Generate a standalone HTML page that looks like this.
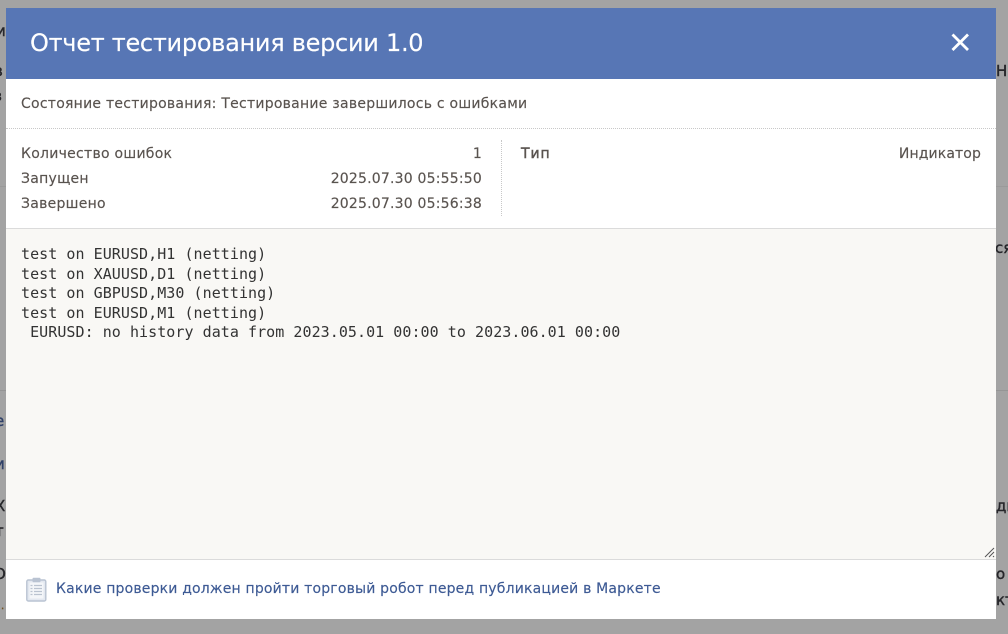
<!DOCTYPE html>
<html lang="ru"><head><meta charset="utf-8"><title>Отчет</title>
<style>
html,body{margin:0;padding:0;width:1008px;height:634px;overflow:hidden;background:#a3a3a3}
body{position:relative;font-family:"DejaVu Sans","Liberation Sans",sans-serif;color:#59534f}
.t{position:absolute;white-space:nowrap;font-size:14px;line-height:20px;letter-spacing:.2px;-webkit-text-stroke:.15px currentColor}
.bg{position:absolute;white-space:nowrap;font-size:15px;line-height:20px;color:#26262a;-webkit-text-stroke:.4px currentColor}
.line{position:absolute;background:#959595;height:1px}
</style></head><body>
<div class="line" style="left:0;top:390px;width:1008px"></div>
<div class="line" style="left:0;top:186px;width:1008px;background:#9a9a9a"></div>
<div class="bg" style="left:-4px;top:21px">и</div>
<div class="bg" style="left:-6px;top:61px">в</div>
<div class="bg" style="left:-6px;top:86px">з</div>
<div class="bg" style="left:-5px;top:411px;color:#2f4068">e</div>
<div class="bg" style="left:-5px;top:454px;color:#2f4068">и</div>
<div class="bg" style="left:-5px;top:496px">X</div>
<div class="bg" style="left:-5px;top:521px">т</div>
<div class="bg" style="left:-6px;top:564px">О</div>
<div class="bg" style="left:1px;top:597px;font-size:10px;color:#70501f">.</div>
<div class="bg" style="left:996px;top:61px">Н</div>
<div class="bg" style="left:995px;top:238px">ся</div>
<div class="bg" style="left:996px;top:496px">дн</div>
<div class="bg" style="left:996px;top:564px">о</div>
<div class="bg" style="left:996px;top:590px">кт</div>

<div style="position:absolute;left:6px;top:8px;width:990px;height:611px;background:#fff;overflow:hidden">
  <div style="position:absolute;left:0;top:0;width:990px;height:71px;background:#5776b5"></div>
  <div class="t" style="left:24px;top:19px;font-size:24px;line-height:32px;color:#fff;letter-spacing:-.28px">Отчет тестирования версии 1.0</div>
  <svg style="position:absolute;left:944px;top:25px" width="21" height="19" viewBox="0 0 21 19"><path d="M2.5 1.5L18 17M18 1.5L2.5 17" stroke="#fff" stroke-width="2.8" fill="none"/></svg>
  <div class="t" style="left:15px;top:86px;letter-spacing:.25px">Состояние тестирования: Тестирование завершилось с ошибками</div>
  <div style="position:absolute;left:0;top:120px;width:990px;border-top:1px dotted #c8c8c8"></div>

  <div class="t" style="left:15px;top:136px;letter-spacing:.27px">Количество ошибок</div>
  <div class="t" style="left:15px;top:161px;letter-spacing:.27px">Запущен</div>
  <div class="t" style="left:15px;top:186px;letter-spacing:.27px">Завершено</div>
  <div class="t" style="right:514px;top:136px">1</div>
  <div class="t" style="right:514px;top:161px">2025.07.30 05:55:50</div>
  <div class="t" style="right:514px;top:186px">2025.07.30 05:56:38</div>
  <div style="position:absolute;left:495px;top:132px;height:76px;border-left:1px dotted #c8c8c8"></div>
  <div class="t" style="left:515px;top:136px;letter-spacing:.9px;-webkit-text-stroke:.45px currentColor">Тип</div>
  <div class="t" style="right:15px;top:136px;letter-spacing:.12px">Индикатор</div>

  <div style="position:absolute;left:0;top:220px;width:990px;height:330px;background:#f9f8f5;border-top:1px solid #dbdbdb;border-bottom:1px solid #dbdbdb"></div>
  <pre style="position:absolute;left:15px;top:237px;margin:0;font-family:'DejaVu Sans Mono','Liberation Mono',monospace;font-size:15px;letter-spacing:.05px;line-height:19.6px;color:#333">test on EURUSD,H1 (netting)
test on XAUUSD,D1 (netting)
test on GBPUSD,M30 (netting)
test on EURUSD,M1 (netting)
 EURUSD: no history data from 2023.05.01 00:00 to 2023.06.01 00:00</pre>
  <svg style="position:absolute;left:978px;top:539px" width="11" height="11" viewBox="0 0 11 11"><path d="M1 10L10 1M5 10L10 5M9 10L10 9" stroke="#555" stroke-width="1" fill="none"/></svg>

  <svg style="position:absolute;left:20px;top:569px" width="21" height="25" viewBox="0 0 21 25">
    <rect x=".8" y="3" width="19" height="21" rx="1.5" fill="#e3e8f0" stroke="#b9c3d2" stroke-width="1.4"/>
    <rect x="3.5" y="5.5" width="14" height="16" fill="#f4f6f9"/>
    <rect x="6.5" y=".8" width="8" height="4.4" rx="1" fill="#b9c3d2"/>
    <path d="M4.5 8.5h2M8 8.5h8M4.5 11.5h2M8 11.5h8M4.5 14.5h2M8 14.5h8M4.5 17.5h2M8 17.5h8" stroke="#bac3d0" stroke-width="1.2"/>
  </svg>
  <div class="t" style="left:50px;top:571px;color:#3d5a94;letter-spacing:.18px">Какие проверки должен пройти торговый робот перед публикацией в Маркете</div>
</div>
</body></html>
